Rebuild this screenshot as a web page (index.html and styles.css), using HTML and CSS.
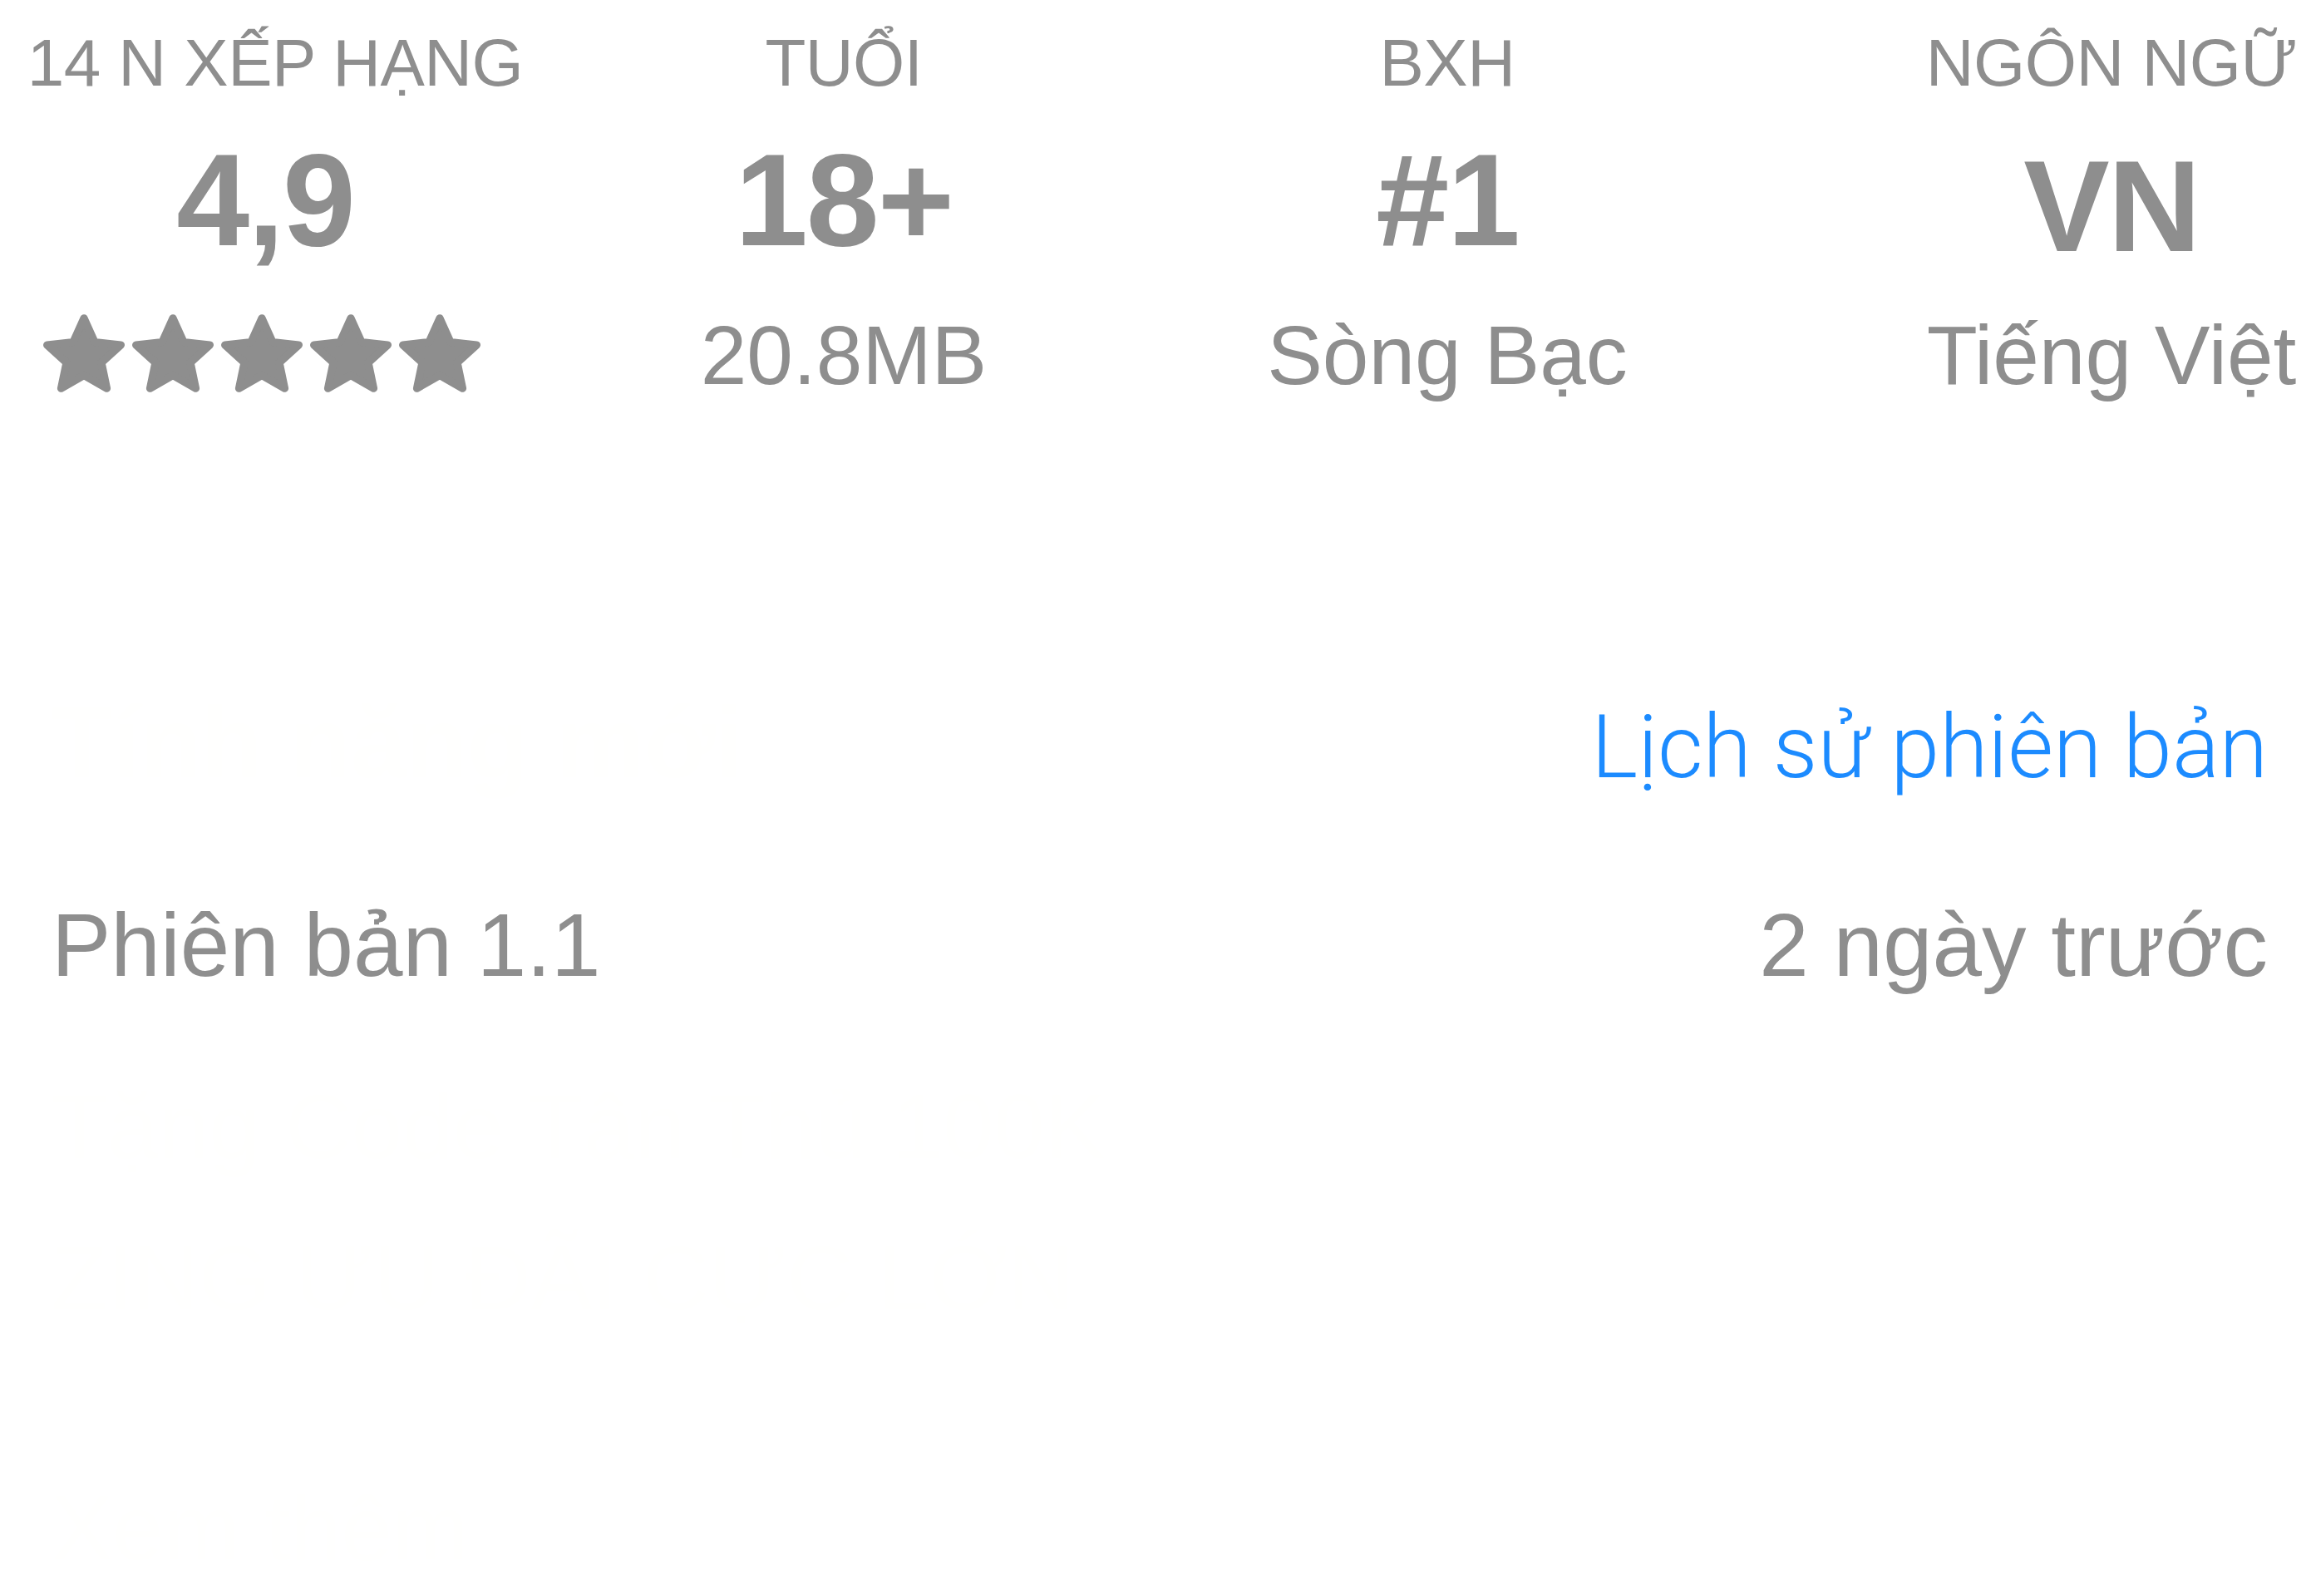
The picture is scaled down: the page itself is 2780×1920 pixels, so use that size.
FILE: index.html
```html
<!DOCTYPE html>
<html lang="vi">
<head>
<meta charset="utf-8">
<title>Thông tin ứng dụng</title>
<link rel="stylesheet" href="styles.css">
</head>
<body>
<main class="page">
  <section class="info-strip">
    <div class="info-col info-col--rating">
      <div class="info-label">14 N XẾP HẠNG</div>
      <div class="info-value">4,9</div>
      <div class="stars" aria-label="5 sao">
        <svg class="star" viewBox="0.44 0.4 23.12 22.1"><path d="M12 1.5L15.06 8.29 22.46 9.1 16.95 14.11 18.47 21.4 12 17.7 5.53 21.4 7.05 14.11 1.54 9.1 8.94 8.29Z"/></svg>
        <svg class="star" viewBox="0.44 0.4 23.12 22.1"><path d="M12 1.5L15.06 8.29 22.46 9.1 16.95 14.11 18.47 21.4 12 17.7 5.53 21.4 7.05 14.11 1.54 9.1 8.94 8.29Z"/></svg>
        <svg class="star" viewBox="0.44 0.4 23.12 22.1"><path d="M12 1.5L15.06 8.29 22.46 9.1 16.95 14.11 18.47 21.4 12 17.7 5.53 21.4 7.05 14.11 1.54 9.1 8.94 8.29Z"/></svg>
        <svg class="star" viewBox="0.44 0.4 23.12 22.1"><path d="M12 1.5L15.06 8.29 22.46 9.1 16.95 14.11 18.47 21.4 12 17.7 5.53 21.4 7.05 14.11 1.54 9.1 8.94 8.29Z"/></svg>
        <svg class="star" viewBox="0.44 0.4 23.12 22.1"><path d="M12 1.5L15.06 8.29 22.46 9.1 16.95 14.11 18.47 21.4 12 17.7 5.53 21.4 7.05 14.11 1.54 9.1 8.94 8.29Z"/></svg>
      </div>
    </div>
    <div class="info-col info-col--age">
      <div class="info-label">TUỔI</div>
      <div class="info-value">18+</div>
      <div class="info-sub">20.8MB</div>
    </div>
    <div class="info-col info-col--chart">
      <div class="info-label">BXH</div>
      <div class="info-value">#1</div>
      <div class="info-sub">Sòng Bạc</div>
    </div>
    <div class="info-col info-col--lang">
      <div class="info-label">NGÔN NGỮ</div>
      <div class="info-value info-value--text">VN</div>
      <div class="info-sub">Tiếng Việt</div>
    </div>
  </section>

  <section class="whats-new">
    <div class="whats-new__head">
      <h2 class="whats-new__title">Tính năng mới</h2>
      <a class="whats-new__link" href="#">Lịch sử phiên bản</a>
    </div>
    <div class="whats-new__meta">
      <span>Phiên bản 1.1</span>
      <span>2 ngày trước</span>
    </div>
    <p class="whats-new__notes">Tặng Code Tân Thủ 100K<br>ZING ƯU ĐÃI CỰC LỚN</p>
    <p class="whats-new__more">Xem thêm</p>
  </section>
</main>
</body>
</html>
```

FILE: styles.css
```css
html, body {
  margin: 0;
  padding: 0;
  background: #ffffff;
}

body {
  width: 2780px;
  height: 1920px;
  overflow: hidden;
  font-family: "Liberation Sans", Arial, sans-serif;
  color: #8e8e8e;
}

.page {
  display: flex;
  flex-direction: column;
}

/* ---------- info strip ---------- */
.info-strip {
  display: grid;
  grid-template-columns: 650px 730px 722px 876px;
  padding-top: 36px;
  white-space: nowrap;
}

.info-col {
  display: flex;
  flex-direction: column;
  align-items: center;
}

.info-label {
  font-size: 80px;
  line-height: 80px;
  letter-spacing: -0.5px;
}

.info-col--rating .info-label {
  padding-left: 12px;
}

.info-value {
  margin-top: 45px;
  font-size: 158px;
  line-height: 158px;
  font-weight: 700;
  letter-spacing: -2px;
}

.info-value--text {
  font-size: 155px;
  padding-top: 9px;
  margin-bottom: -9px;
}

.info-col--rating .info-value {
  margin-right: 12px;
}

.info-sub {
  margin-top: 58px;
  font-size: 100px;
  line-height: 100px;
}

.stars {
  margin-top: 59px;
  margin-right: 20px;
  display: flex;
  gap: 9px;
  height: 99px;
}

.star {
  width: 98px;
  height: 94px;
  fill: #8e8e8e;
  stroke: #8e8e8e;
  stroke-width: 2.2;
  stroke-linejoin: round;
}

/* ---------- what's new ---------- */
.whats-new {
  margin-top: 356px;
  padding: 0 52px 0 62px;
  display: flex;
  flex-direction: column;
}

.whats-new__head {
  display: flex;
  justify-content: space-between;
  align-items: baseline;
  height: 120px;
}

.whats-new__title {
  margin: 0;
  font-size: 120px;
  line-height: 120px;
  font-weight: 700;
  color: #fffffe;
}

.whats-new__link {
  font-family: Roboto, "Liberation Sans", sans-serif;
  font-weight: 300;
  font-size: 106px;
  line-height: 120px;
  color: #1c8bff;
  text-decoration: none;
}

.whats-new__meta {
  margin-top: 131px;
  display: flex;
  justify-content: space-between;
  font-size: 107px;
  line-height: 107px;
  color: #8e8e8e;
}

.whats-new__notes {
  margin: 73px 0 0;
  font-size: 110px;
  line-height: 182px;
  color: #fffffe;
}

.whats-new__more {
  margin: 150px 0 0;
  font-size: 110px;
  line-height: 120px;
  color: #fffffe;
}
```
